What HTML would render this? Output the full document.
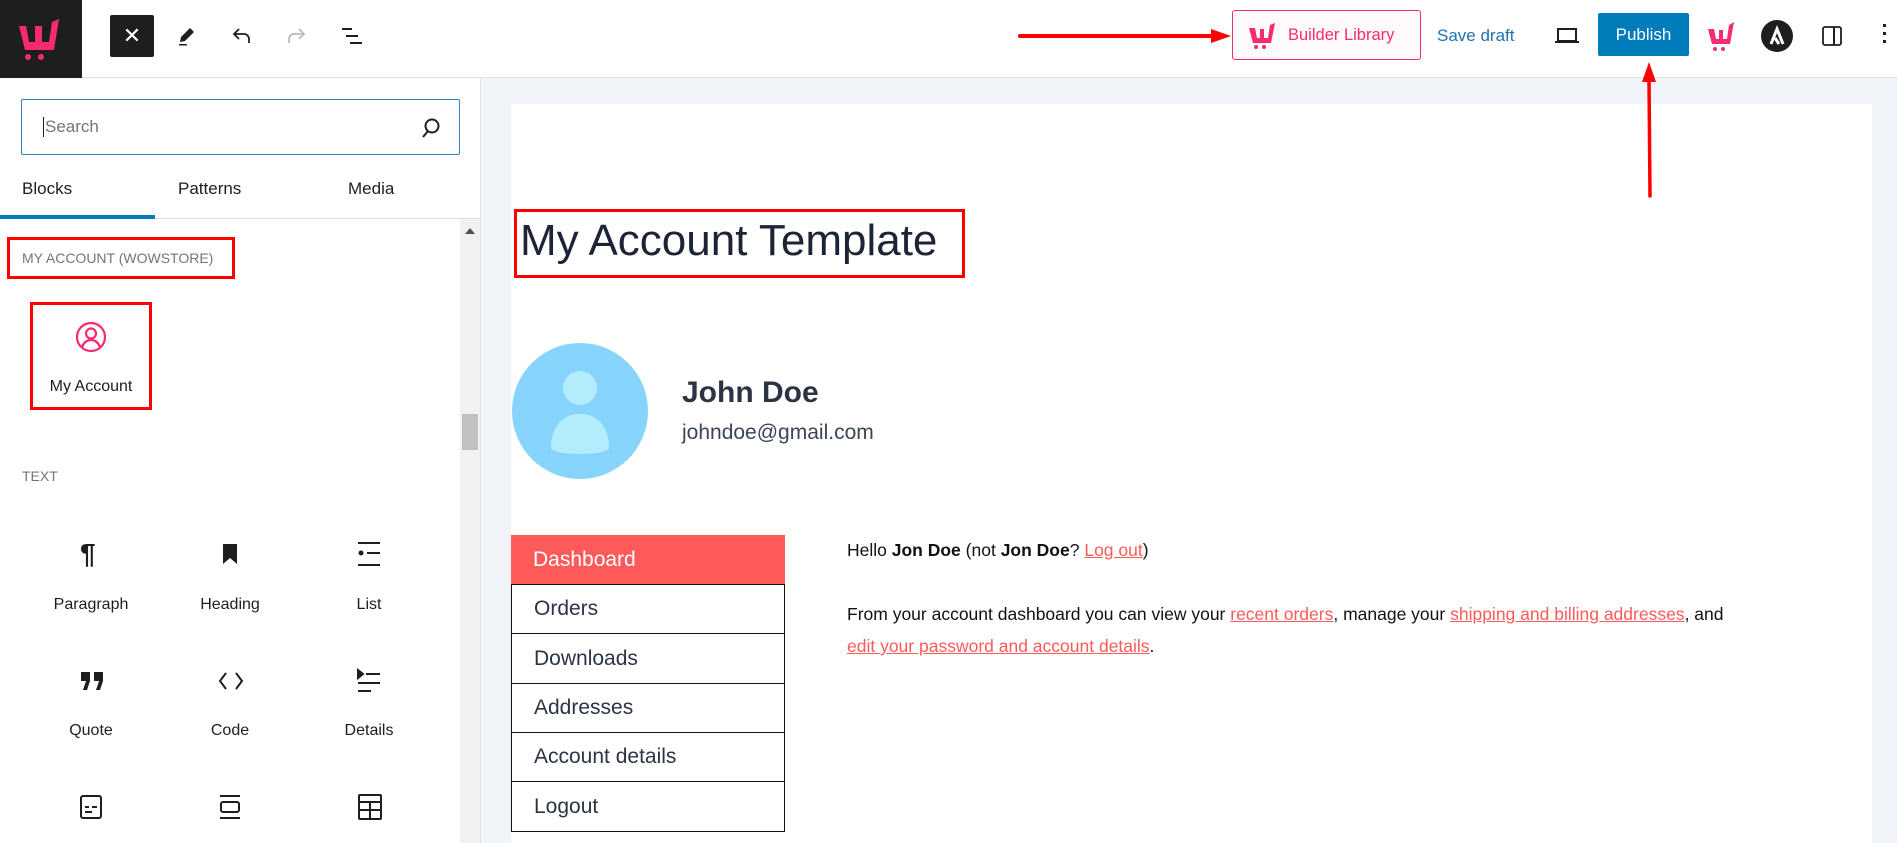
<!DOCTYPE html>
<html><head><meta charset="utf-8"><style>
*{box-sizing:border-box;margin:0;padding:0}
body{width:1897px;height:843px;overflow:hidden;font-family:"Liberation Sans",sans-serif;background:#fff;position:relative;color:#1e1e1e}
.abs{position:absolute}
.hdr{left:0;top:0;width:1897px;height:78px;border-bottom:1px solid #e0e0e0;background:#fff}
.logo{left:0;top:0;width:82px;height:78px;background:#1e1e1e}
.side{left:0;top:78px;width:481px;height:765px;border-right:1px solid #e0e0e0;background:#fff}
.canvas{left:481px;top:78px;width:1416px;height:765px;background:#f0f4f8}
.page{left:511px;top:104px;width:1361px;height:739px;background:#fff}
.red{border:3px solid #f00}
.lbl{font-size:16px;color:#1e1e1e;text-align:center;width:140px}
.menu div{position:absolute;left:511px;width:274px;border:1.5px solid #111;border-top:none;font-size:21px;color:#2b3445;padding-left:22px;display:flex;align-items:center}
a{color:#fe5a5a}
</style></head><body>
<div class="abs hdr"></div>
<div class="abs logo">
<svg width="82" height="78" viewBox="0 0 82 78"><path d="M19 26 L25 50 L54 50 L59 19 L52 22 L49 42 L42 42 L42 26 L35 26 L35 42 L29 42 L26 26 Z" fill="#f72a72"/><circle cx="28" cy="57" r="3" fill="#f72a72"/><circle cx="41" cy="57" r="3" fill="#f72a72"/></svg>
</div>
<div class="abs" style="left:110px;top:15px;width:44px;height:42px;background:#1e1e1e;border-radius:2px;color:#fff;font-size:22px;text-align:center;line-height:42px">✕</div>
<svg class="abs" style="left:175px;top:24px" width="24" height="24" viewBox="0 0 24 24"><path d="M15 4l4 4-9 9-5 1 1-5z" fill="#1e1e1e"/><rect x="4" y="20" width="8" height="1.5" fill="#1e1e1e"/></svg>
<svg class="abs" style="left:230px;top:24px" width="24" height="24" viewBox="0 0 24 24"><path d="M9 5L4 10l5 5M4 10h10a5 5 0 0 1 5 5v4" fill="none" stroke="#1e1e1e" stroke-width="1.8"/></svg>
<svg class="abs" style="left:284px;top:24px" width="24" height="24" viewBox="0 0 24 24"><path d="M15 5l5 5-5 5M20 10H10a5 5 0 0 0-5 5v4" fill="none" stroke="#bbb" stroke-width="1.8"/></svg>
<svg class="abs" style="left:339px;top:24px" width="26" height="24" viewBox="0 0 26 24"><path d="M3 5h10M7 12h12M11 19h12" stroke="#1e1e1e" stroke-width="2"/></svg>
<svg class="abs" style="left:1015px;top:26px" width="220" height="20"><line x1="5" y1="10" x2="200" y2="10" stroke="#f00" stroke-width="4" stroke-linecap="round"/><path d="M196 3 L216 10 L196 17Z" fill="#f00"/></svg>
<div class="abs" style="left:1232px;top:10px;width:189px;height:50px;border:1px solid #f72a72;border-radius:3px;background:#fffafa;display:flex;align-items:center;padding-left:14px;color:#f72a72;font-size:16.5px">
<svg width="32" height="32" viewBox="0 0 32 32" style="margin-right:9px"><path d="M2 9 L6 24 L24 24 L28 4 L23 6 L21 19 L17 19 L17 10 L13 10 L13 19 L10 19 L8 9Z" fill="#f72a72"/><circle cx="9" cy="28" r="2" fill="#f72a72"/><circle cx="17" cy="28" r="2" fill="#f72a72"/></svg>Builder Library</div>
<div class="abs" style="left:1437px;top:26px;font-size:17px;color:#2271b1">Save draft</div>
<svg class="abs" style="left:1553px;top:24px" width="28" height="24" viewBox="0 0 28 24"><rect x="5" y="5" width="18" height="12" fill="none" stroke="#1e1e1e" stroke-width="2"/><rect x="2" y="17" width="24" height="2" fill="#1e1e1e"/></svg>
<div class="abs" style="left:1598px;top:13px;width:91px;height:43px;background:#007cba;border-radius:2px;color:#fff;font-size:17px;text-align:center;line-height:43px">Publish</div>
<svg class="abs" style="left:1706px;top:18px" width="32" height="36" viewBox="0 0 32 36"><path d="M2 11 L6 26 L24 26 L28 4 L23 7 L21 21 L17 21 L17 12 L13 12 L13 21 L10 21 L8 11Z" fill="#f72a72"/><circle cx="9" cy="31" r="2" fill="#f72a72"/><circle cx="17" cy="31" r="2" fill="#f72a72"/></svg>
<svg class="abs" style="left:1760px;top:19px" width="34" height="34" viewBox="0 0 34 34"><circle cx="17" cy="17" r="16" fill="#1e1e1e"/><path d="M11 25 L17 10 L23 25 M15 19 L19 25" stroke="#fff" stroke-width="3" fill="none"/></svg>
<svg class="abs" style="left:1820px;top:24px" width="24" height="24" viewBox="0 0 24 24"><rect x="3" y="3" width="18" height="18" rx="2" fill="none" stroke="#1e1e1e" stroke-width="1.8"/><rect x="13" y="3" width="2" height="18" fill="#1e1e1e"/></svg>
<div class="abs" style="left:1883px;top:24px;width:4px"><div style="width:3px;height:3px;background:#1e1e1e;margin-bottom:5px"></div><div style="width:3px;height:3px;background:#1e1e1e;margin-bottom:5px"></div><div style="width:3px;height:3px;background:#1e1e1e"></div></div>

<div class="abs side"></div>
<div class="abs" style="left:21px;top:99px;width:439px;height:56px;border:1px solid #3582c4;border-radius:2px"></div>
<div class="abs" style="left:43px;top:117px;font-size:17px;color:#757575;border-left:1px solid #1e1e1e;padding-left:1px">Search</div>
<svg class="abs" style="left:418px;top:115px" width="26" height="26" viewBox="0 0 26 26"><circle cx="14" cy="11" r="6.5" fill="none" stroke="#1e1e1e" stroke-width="2"/><line x1="10" y1="16" x2="5" y2="22" stroke="#1e1e1e" stroke-width="2"/></svg>
<div class="abs" style="left:22px;top:179px;font-size:17px">Blocks</div>
<div class="abs" style="left:178px;top:179px;font-size:17px">Patterns</div>
<div class="abs" style="left:348px;top:179px;font-size:17px">Media</div>
<div class="abs" style="left:0;top:218px;width:481px;height:1px;background:#e0e0e0"></div>
<div class="abs" style="left:0;top:215px;width:155px;height:4px;background:#007cba"></div>
<div class="abs" style="left:460px;top:219px;width:20px;height:624px;background:#f1f1f1"></div>
<div class="abs" style="left:462px;top:414px;width:16px;height:36px;background:#c1c1c1"></div>
<div class="abs" style="left:465px;top:228px;width:0;height:0;border-left:5px solid transparent;border-right:5px solid transparent;border-bottom:6px solid #505050"></div>
<div class="abs red" style="left:7px;top:237px;width:228px;height:42px"></div>
<div class="abs" style="left:22px;top:250px;font-size:14px;color:#757575">MY ACCOUNT (WOWSTORE)</div>
<div class="abs red" style="left:30px;top:302px;width:122px;height:108px"></div>
<svg class="abs" style="left:75px;top:321px" width="32" height="32" viewBox="0 0 32 32"><circle cx="16" cy="16" r="14" fill="none" stroke="#f72a72" stroke-width="2.2"/><circle cx="16" cy="12.5" r="5" fill="none" stroke="#f72a72" stroke-width="2.2"/><path d="M7 26c2-5 5-7 9-7s7 2 9 7" fill="none" stroke="#f72a72" stroke-width="2.2"/></svg>
<div class="abs lbl" style="left:21px;top:378px">My Account</div>
<div class="abs" style="left:22px;top:468px;font-size:14px;color:#757575">TEXT</div>
<div class="abs" style="left:80px;top:538px;font-size:28px;font-weight:bold">¶</div>
<svg class="abs" style="left:220px;top:543px" width="20" height="22"><path d="M3 1h14v20l-7-6-7 6z" fill="#1e1e1e"/></svg>
<svg class="abs" style="left:356px;top:541px" width="26" height="26"><path d="M2 2h22M11 12h13M2 24h22" stroke="#1e1e1e" stroke-width="2"/><circle cx="5" cy="12" r="2.5" fill="#1e1e1e"/></svg>
<div class="abs lbl" style="left:21px;top:596px">Paragraph</div>
<div class="abs lbl" style="left:160px;top:596px">Heading</div>
<div class="abs lbl" style="left:299px;top:596px">List</div>
<svg class="abs" style="left:79px;top:670px" width="26" height="22" viewBox="0 0 26 22"><path d="M2 2h9v9l-3 9H4l3-9H2zM15 2h9v9l-3 9h-4l3-9h-5z" fill="#1e1e1e"/></svg>
<svg class="abs" style="left:218px;top:670px" width="26" height="22"><path d="M8 3L2 11l6 8M18 3l6 8-6 8" fill="none" stroke="#1e1e1e" stroke-width="2"/></svg>
<svg class="abs" style="left:356px;top:668px" width="26" height="26"><path d="M2 2l5 4-5 4zM10 6h14M2 15h22M2 23h13" stroke="#1e1e1e" stroke-width="2" fill="#1e1e1e"/></svg>
<div class="abs lbl" style="left:21px;top:722px">Quote</div>
<div class="abs lbl" style="left:160px;top:722px">Code</div>
<div class="abs lbl" style="left:299px;top:722px">Details</div>
<svg class="abs" style="left:79px;top:794px" width="24" height="26"><rect x="2" y="2" width="20" height="22" rx="2" fill="none" stroke="#1e1e1e" stroke-width="2"/><path d="M6 13h4M13 13h5M6 18h7" stroke="#1e1e1e" stroke-width="2"/></svg>
<svg class="abs" style="left:218px;top:794px" width="24" height="26"><path d="M2 2h20M2 24h20" stroke="#1e1e1e" stroke-width="2"/><rect x="3" y="8" width="18" height="10" rx="2" fill="none" stroke="#1e1e1e" stroke-width="2"/></svg>
<svg class="abs" style="left:357px;top:793px" width="26" height="28"><rect x="2" y="2" width="22" height="24" rx="1" fill="none" stroke="#1e1e1e" stroke-width="2"/><path d="M2 9h22M2 17h22M13 9v17" stroke="#1e1e1e" stroke-width="2"/></svg>

<div class="abs canvas"></div>
<div class="abs page"></div>
<svg class="abs" style="left:1639px;top:60px" width="20" height="140"><path d="M10 2 L3 22 L17 22Z" fill="#f00"/><line x1="10" y1="18" x2="11" y2="136" stroke="#f00" stroke-width="3.5" stroke-linecap="round"/></svg>
<div class="abs red" style="left:514px;top:209px;width:451px;height:69px"></div>
<div class="abs" style="left:520px;top:216px;font-size:44px;color:#1c2436">My Account Template</div>
<svg class="abs" style="left:511px;top:342px" width="138" height="138" viewBox="0 0 138 138"><defs><clipPath id="c"><circle cx="69" cy="69" r="68"/></clipPath></defs><circle cx="69" cy="69" r="68" fill="#87d4fc"/><g clip-path="url(#c)"><circle cx="69" cy="46" r="17" fill="#b3ecfd"/><path d="M40 106c0-22 12-34 29-34s29 12 29 34c0 8-58 8-58 0z" fill="#b3ecfd"/></g></svg>
<div class="abs" style="left:682px;top:376px;font-size:30px;font-weight:bold;color:#2b3445">John Doe</div>
<div class="abs" style="left:682px;top:421px;font-size:21px;color:#3a4556">johndoe@gmail.com</div>
<div class="menu">
<div style="top:535px;height:50px;background:#fe5a5a;color:#fff;border:none">Dashboard</div>
<div style="top:584px;height:50px;border-top:1.5px solid #111">Orders</div>
<div style="top:634px;height:50px">Downloads</div>
<div style="top:684px;height:49px">Addresses</div>
<div style="top:733px;height:49px">Account details</div>
<div style="top:782px;height:50px">Logout</div>
</div>
<div class="abs" style="left:847px;top:540px;font-size:17.5px;color:#111">Hello <b>Jon Doe</b> (not <b>Jon Doe</b>? <a href="#">Log out</a>)</div>
<div class="abs" style="left:847px;top:598px;width:1000px;font-size:17.5px;color:#111;line-height:32px;white-space:nowrap">From your account dashboard you can view your <a href="#">recent orders</a>, manage your <a href="#">shipping and billing addresses</a>, and<br><a href="#">edit your password and account details</a>.</div>
</body></html>
